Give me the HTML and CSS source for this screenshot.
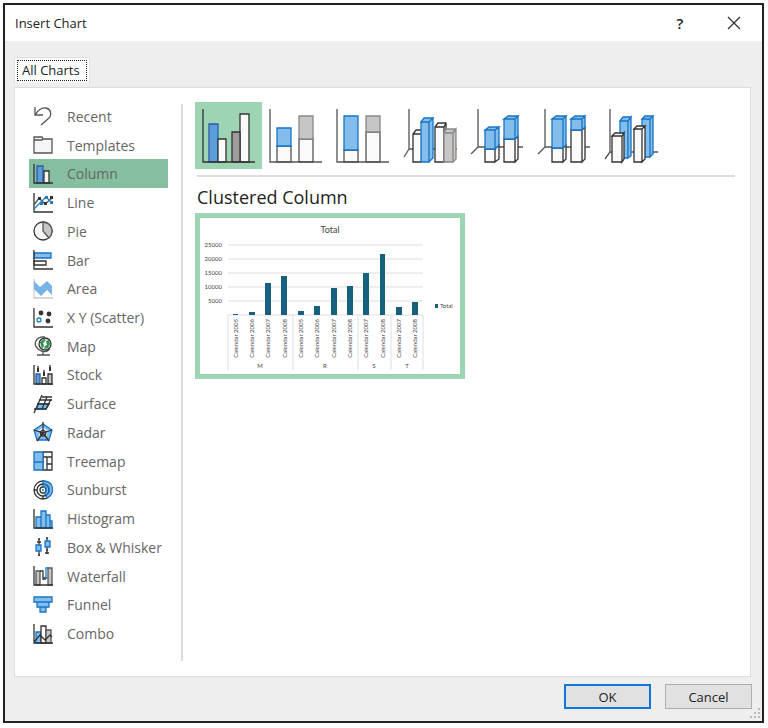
FILE: index.html
```html
<!DOCTYPE html>
<html lang="en">
<head>
    <meta charset="UTF-8">
    <meta name="viewport" content="width=device-width, initial-scale=1.0">
    <title>Insert Chart</title>
    <link rel="stylesheet" href="styles.css">
</head>
<body>
    <main class="dialog">
        <header class="titleBar">
            <h1>Insert Chart</h1>
            <button class="titleBtn" aria-label="Help">?</button>
            <button class="titleBtn" aria-label="Close">
                <svg width="14" height="14" viewBox="0 0 14 14"><path class="k" d="M1 1l12 12M13 1L1 13"/></svg>
            </button>
        </header>

        <div class="tabs">
            <button class="tab"><span>All Charts</span></button>
        </div>

        <section class="panel">
            <nav class="categories">
                <button><svg viewBox="0 0 20 20"><path class="g" d="M2 1v8h8M2 9C5 4 9 1 13 2c5 1 6 7 3 10L8 19"/></svg>Recent</button>
                <button><svg viewBox="0 0 20 20"><path class="g l" d="M1 2h8l1 2h9v14H1zM1 5h8l1-1"/></svg>Templates</button>
                <button class="selected"><svg viewBox="0 0 20 20"><path class="b2" d="M4 2h6v17H4z"/><path class="k w" d="M11 7h5v12h-5z"/><path class="k" d="M1 0v19h19"/></svg>Column</button>
                <button><svg viewBox="0 0 20 20"><path class="k" d="M1 0v19h19"/><path class="g" d="M1 12l5-7 6 6 7-6"/><path class="bl" d="M1 16L13 4l6 6"/><path class="dot" d="M5 4h3v3H5zM11 9h3v3h-3zM17 3h3v3h-3z"/><path class="dotb" d="M12 3h3v3h-3zM17 8h3v3h-3zM7 9h3v3H7z"/></svg>Line</button>
                <button><svg viewBox="0 0 20 20"><circle class="k l" cx="10" cy="10" r="9"/><path class="g gr" d="M10 1v9l6 7c5-5 4-15-6-16z"/></svg>Pie</button>
                <button><svg viewBox="0 0 20 20"><path class="b" d="M1 3h17v5H1z"/><path class="k w" d="M1 11h12v4H1z"/><path class="k" d="M1 0v19h19"/></svg>Bar</button>
                <button><svg viewBox="0 0 20 20"><path class="lg" d="M1 0v19h19"/><path class="area" d="M1 2l6 6 7-6 5 5v9l-5-5-6 6-7-7z"/></svg>Area</button>
                <button><svg viewBox="0 0 20 20"><path class="k" d="M1 0v19h19"/><circle class="dot" cx="8" cy="5" r="2.4"/><circle class="dot" cx="16" cy="6" r="2.4"/><circle class="dot" cx="15" cy="13" r="2.4"/><circle class="bl" cx="6" cy="12" r="2"/></svg>X Y (Scatter)</button>
                <button><svg viewBox="0 0 20 20"><path class="g" d="M12 1C2 0 0 9 5 13s9 3 12 0M10 15v4M4 19h13"/><circle class="k w" cx="12" cy="8" r="6"/><path class="land" d="M7 6l4-3 2 1-3 3 1 3-2 3zM13 5l3-1 1 4-2 4-4 1 1-3 2-1z"/></svg>Map</button>
                <button><svg viewBox="0 0 20 20"><path class="b2" d="M3 9h4v10H3z"/><path class="k w" d="M9 13h4v6H9z"/><path class="k gr" d="M15 9h4v10h-4z"/><path class="k" d="M1 0v19h19M5 1v5M11 5v5M17 0v5"/><path class="dot" d="M4 3h2v4H4zM10 7h2v4h-2zM16 2h2v4h-2z"/></svg>Stock</button>
                <button><svg viewBox="0 0 20 20"><path class="b" d="M5 10h11l-3 5H4z"/><path class="k" d="M1 19L9 1M9 15l5-12M13 15l5-10M1 15h12l3-5H4M6 6h13M9 3h10"/></svg>Surface</button>
                <button><svg viewBox="0 0 20 20"><path class="b" d="M10 2l9 6-3 10H4L1 8z"/><path class="radarIn" d="M10 5l5 4-2 6H7L5 9z"/><path class="k" d="M10 0v11L1 8M10 11l9-3M10 11l-6 8M10 11l6 8M10 8l3 2-1 4H8l-1-4z"/></svg>Radar</button>
                <button><svg viewBox="0 0 20 20"><path class="k w" d="M10 1h9v5h-9zM10 6h4v13h-4zM14 6h5v7h-5zM14 13h5v6h-5z"/><path class="b" d="M1 1h9v10H1zM1 11h9v8H1z"/></svg>Treemap</button>
                <button><svg viewBox="0 0 20 20"><circle class="k w" cx="10" cy="10" r="9"/><path class="b" d="M10 1c12 0 12 14 4 17l-4-8z"/><circle class="k" cx="10" cy="10" r="6"/><circle class="k w" cx="10" cy="10" r="3"/><path class="bl" d="M10 4c8 0 8 9 3 11M10 7c5 0 4 5 1 6"/><path class="k" d="M1 10h3M10 16v3"/><circle class="dotb" cx="10" cy="10" r="1"/></svg>Sunburst</button>
                <button><svg viewBox="0 0 20 20"><path class="b" d="M3 8h5v11H3zM8 2h5v17H8zM13 6h4v13h-4zM17 12h2v7h-2z"/><path class="k" d="M1 0v19h19"/></svg>Histogram</button>
                <button><svg viewBox="0 0 20 20"><path class="k" d="M6 2v17M5 2h2M4 5h4M5 18h2M14 1v16M13 1h2M13 13h2M12 16h4"/><path class="b" d="M3 8h5v6H3zM12 4h5v6h-5z"/></svg>Box &amp; Whisker</button>
                <button><svg viewBox="0 0 20 20"><path class="g gr" d="M3 5h4v14H3zM15 2h4v17h-4z"/><path class="k" d="M1 0v19h19M7 5h3v8h3M10 12h4"/><path class="bl" d="M11 12h2V2h3"/></svg>Waterfall</button>
                <button><svg viewBox="0 0 20 20"><path class="b" d="M1 2h18v5H1zM4 7h12v5H4zM7 12h6v5H7z"/></svg>Funnel</button>
                <button><svg viewBox="0 0 20 20"><path class="b" d="M3 8h5v11H3z"/><path class="k w" d="M8 2h5v17H8z"/><path class="g gr" d="M13 6h5v13h-5z"/><path class="k" d="M1 0v19h19M1 18l6-7 5 5 5-5 2 2"/></svg>Combo</button>
            </nav>

            <div class="content">
                <div class="chartTypes">
                    <button class="selected" aria-label="Clustered Column">
                        <svg viewBox="0 0 67 67">
                            <path class="b2" d="M14 22h9v38h-9z"/><path class="k w" d="M23 37h8v23h-8zM45 12h9v48h-9z"/><path class="k dg" d="M37 30h8v30h-8z"/>
                            <path class="k" d="M8 7v53h52"/>
                        </svg>
                    </button>
                    <button aria-label="Stacked Column">
                        <svg viewBox="0 0 67 67">
                            <path class="g w" d="M15 44h14v16H15zM37 37h14v23H37z"/><path class="b" d="M15 26h14v18H15z"/><path class="ga gr" d="M37 14h14v23H37z"/>
                            <path class="g" d="M8 7v53h52"/>
                        </svg>
                    </button>
                    <button aria-label="100% Stacked Column">
                        <svg viewBox="0 0 67 67">
                            <path class="g w" d="M15 48h14v12H15zM37 30h14v30H37z"/><path class="b" d="M15 14h14v34H15z"/><path class="ga gr" d="M37 14h14v16H37z"/>
                            <path class="g" d="M8 7v53h52"/>
                        </svg>
                    </button>
                    <button aria-label="3-D Clustered Column">
                        <svg viewBox="0 0 67 67">
                            <path class="g" d="M13 7v40h48M13 47l-5 8"/>
                            <path class="k w" d="M17 32l3-4h8v29l-3 3h-8zM17 32h8"/>
                            <path class="b" d="M25 20h8v40h-8zM25 20l3-4h9l-4 4zM33 20l4-4v40l-4 4z"/>
                            <path class="k w" d="M39 25l3-4h8v36l-2 3h-9zM39 25h9v35M48 25l2-4"/>
                            <path class="ga gr" d="M48 31h9v29h-9zM48 31l2-4h9l-2 4zM57 31l3-4v30l-3 3z"/>
                        </svg>
                    </button>
                    <button aria-label="3-D Stacked Column">
                        <svg viewBox="0 0 67 67">
                            <path class="g" d="M15 7v38h45M15 45l-7 7"/>
                            <path class="k w" d="M22 47h10v13H22zM32 47l4-4v14l-4 3zM41 37h11v23H41zM52 37l3-3v23l-3 3z"/>
                            <path class="b" d="M22 28h10v19H22zM22 28l4-3h10l-4 3zM32 28l4-3v18l-4 4zM41 17h11v20H41zM41 17l4-3h10l-3 3zM52 17l3-3v20l-3 3z"/>
                        </svg>
                    </button>
                    <button aria-label="3-D 100% Stacked Column">
                        <svg viewBox="0 0 67 67">
                            <path class="g" d="M15 7v38h45M15 45l-7 7"/>
                            <path class="k w" d="M22 46h11v14H22zM33 46l3-3v14l-3 3zM41 28h11v32H41zM52 28l3-3v32l-3 3z"/>
                            <path class="b" d="M22 17h11v29H22zM22 17l4-3h10l-3 3zM33 17l3-3v29l-3 3zM41 17h11v11H41zM41 17l4-3h10l-3 3zM52 17l3-3v11l-3 3z"/>
                        </svg>
                    </button>
                    <button aria-label="3-D Column">
                        <svg viewBox="0 0 67 67">
                            <path class="g" d="M13 7v43h48M13 50l-5 7"/>
                            <path class="b" d="M23 19h8v37h-8zM23 19l3-4h8l-3 4zM31 19l3-4v39l-3 2zM45 17h8v38h-8zM45 17l3-3h8l-3 3zM53 17l3-3v38l-3 3z"/>
                            <path class="k w" d="M15 34h10v26H15zM15 34l3-3h9l-2 3zM25 34l2-3v26l-2 3zM37 27h8v33h-8zM37 27l3-3h8l-3 3zM45 27l3-3v33l-3 3z"/>
                        </svg>
                    </button>
                </div>

                <h2>Clustered Column</h2>

                <button class="preview" aria-label="Clustered Column preview">
                    <svg viewBox="0 0 260 156">
                        <text class="chartTitle" x="130" y="15">Total</text>
                        <path class="gridLine" d="M28 27h195M28 41h195M28 55h195M28 69h195M28 83h195M28 97h195"/>
                        <path class="groupLine" d="M28 97v55M93 97v55M158 97v55M191 97v55M223 97v55"/>
                        <g class="yAxis">
                            <text x="22" y="29">25000</text>
                            <text x="22" y="43">20000</text>
                            <text x="22" y="57">15000</text>
                            <text x="22" y="71">10000</text>
                            <text x="22" y="85">5000</text>
                        </g>
                        <path class="bars" d="M33 96h5v1h-5zM49 94h6v3h-6zM65 65h6v32h-6zM81 58h6v39h-6zM98 93h6v4h-6zM114 88h6v9h-6zM131 70h6v27h-6zM147 68h6v29h-6zM163 55h6v42h-6zM180 36h5v61h-5zM196 89h6v8h-6zM212 84h6v13h-6z"/>
                        <g class="xAxis">
                            <text transform="translate(38 101) rotate(-90)">Calendar 2005</text>
                            <text transform="translate(54 101) rotate(-90)">Calendar 2006</text>
                            <text transform="translate(70 101) rotate(-90)">Calendar 2007</text>
                            <text transform="translate(87 101) rotate(-90)">Calendar 2008</text>
                            <text transform="translate(103 101) rotate(-90)">Calendar 2005</text>
                            <text transform="translate(119 101) rotate(-90)">Calendar 2006</text>
                            <text transform="translate(136 101) rotate(-90)">Calendar 2007</text>
                            <text transform="translate(152 101) rotate(-90)">Calendar 2008</text>
                            <text transform="translate(168 101) rotate(-90)">Calendar 2007</text>
                            <text transform="translate(185 101) rotate(-90)">Calendar 2008</text>
                            <text transform="translate(201 101) rotate(-90)">Calendar 2007</text>
                            <text transform="translate(217 101) rotate(-90)">Calendar 2008</text>
                        </g>
                        <g class="groups">
                            <text x="60" y="150">M</text>
                            <text x="125" y="150">R</text>
                            <text x="174" y="150">S</text>
                            <text x="207" y="150">T</text>
                        </g>
                        <path class="bars" d="M235 86h3v4h-3z"/>
                        <text class="legend" x="240" y="90">Total</text>
                    </svg>
                </button>
            </div>
        </section>

        <footer class="actions">
            <button class="ok">OK</button>
            <button>Cancel</button>
        </footer>
        <svg class="grip" width="10" height="10" viewBox="0 0 10 10"><path d="M8 0h2v2H8zM4 4h2v2H4zM8 4h2v2H8zM0 8h2v2H0zM4 8h2v2H4zM8 8h2v2H8z"/></svg>
    </main>
</body>
</html>
```

FILE: styles.css
```css
* {
    box-sizing: border-box;
}
body {
    margin: 3px 4px 5px 3px;
    background-color: white;
    font-family: "Open Sans", "Noto Sans", sans-serif;
    font-size: 13px;
    color: #222;
}
button {
    font: inherit;
    color: inherit;
    border: none;
    padding: 0;
    background: none;
}
svg {
    display: block;
}
.dialog {
    position: relative;
    display: flex;
    flex-direction: column;
    min-height: calc(100vh - 8px);
    border: 2px solid #222;
    background-color: #eee;
}

/* title bar */
.titleBar {
    display: flex;
    align-items: center;
    height: 36px;
    padding: 0 7px 0 10px;
    background-color: white;
}
.titleBar h1 {
    flex: 1;
    margin: 0;
    font-size: 13px;
    font-weight: normal;
}
.titleBtn {
    display: flex;
    align-items: center;
    justify-content: center;
    width: 42px;
    height: 34px;
    font-size: 15px;
    font-weight: 600;
}
.titleBtn + .titleBtn {
    margin-left: 12px;
}

/* tabs */
.tabs {
    padding: 16px 9px 0;
}
.tab {
    display: block;
    padding: 2px;
    border: 1px solid #ddd;
    border-bottom: none;
    background-color: white;
}
.tab span {
    display: block;
    padding: 0 6px 0 4px;
    border: 1px dotted #222;
    line-height: 19px;
}

/* main panel */
.panel {
    flex: 1;
    display: flex;
    margin: 4px 11px 0 9px;
    border: 1px solid #ddd;
    background-color: white;
}
.categories {
    position: relative;
    display: flex;
    flex-direction: column;
    width: 168px;
    padding: 14px 15px 28px 14px;
    color: #666;
    font-size: 14px;
}
.categories::after {
    content: "";
    position: absolute;
    top: 16px;
    right: 0;
    bottom: 15px;
    border-right: 2px solid #ddd;
}
.categories button {
    flex: 1;
    display: flex;
    align-items: center;
    gap: 14px;
    padding-left: 4px;
    text-align: left;
    white-space: nowrap;
}
.categories button.selected {
    background-color: #86bf9f;
}
.categories svg {
    width: 20px;
    height: 20px;
}
.content {
    flex: 1;
    padding: 14px 15px 14px 12px;
}
.chartTypes {
    display: flex;
}
.chartTypes svg {
    width: 67px;
    height: 67px;
}
.chartTypes button.selected {
    background-color: #9dd4b4;
}
.content h2 {
    margin: 6px 0 4px 2px;
    padding-top: 8px;
    border-top: 2px solid #ddd;
    font-size: 18px;
    font-weight: normal;
    line-height: 24px;
}

/* preview chart */
.preview {
    display: block;
    border: 5px solid #9dd4b4;
    background-color: white;
}
.preview svg {
    width: 260px;
    height: 156px;
}
.preview text {
    font-family: Lato, "Open Sans", sans-serif;
    font-size: 6px;
    fill: #444;
}
.preview .chartTitle {
    font-size: 9px;
    text-anchor: middle;
}
.yAxis, .xAxis {
    text-anchor: end;
}
.groups {
    text-anchor: middle;
}
.gridLine, .groupLine {
    stroke: #ddd;
    fill: none;
}
.bars {
    fill: #17617f;
}

/* icon strokes and fills */
.k, .g, .ga, .lg, .bl {
    fill: none;
    stroke: #333;
    stroke-width: 1.3;
}
.g {
    stroke: #555;
}
.ga {
    stroke: #888;
}
.lg {
    stroke: #ccc;
}
.bl {
    stroke: #1f7ecb;
}
.b {
    fill: #83bdec;
    stroke: #1873c4;
    stroke-width: 1.3;
}
.b2 {
    fill: #5c9fd8;
    stroke: #2b5da8;
    stroke-width: 1.3;
}
.w {
    fill: #fafafa;
}
.l {
    fill: #f6f6f6;
}
.gr {
    fill: #c8c6c4;
}
.dg {
    fill: #9f9b98;
}
.dot {
    fill: #333;
}
.dotb {
    fill: #1f7ecb;
}
.area {
    fill: #76b3e6;
}
.land {
    fill: #2e9150;
}
.radarIn {
    fill: #e4f1fb;
}

/* buttons */
.actions {
    display: flex;
    justify-content: flex-end;
    gap: 14px;
    padding: 7px 10px 12px;
}
.actions button {
    width: 87px;
    height: 25px;
    border: 1px solid #adadad;
    background-color: #e1e1e1;
}
.actions .ok {
    border: 2px solid #0f78d7;
}
.grip {
    position: absolute;
    right: 2px;
    bottom: 3px;
    fill: #bbb;
}
```
